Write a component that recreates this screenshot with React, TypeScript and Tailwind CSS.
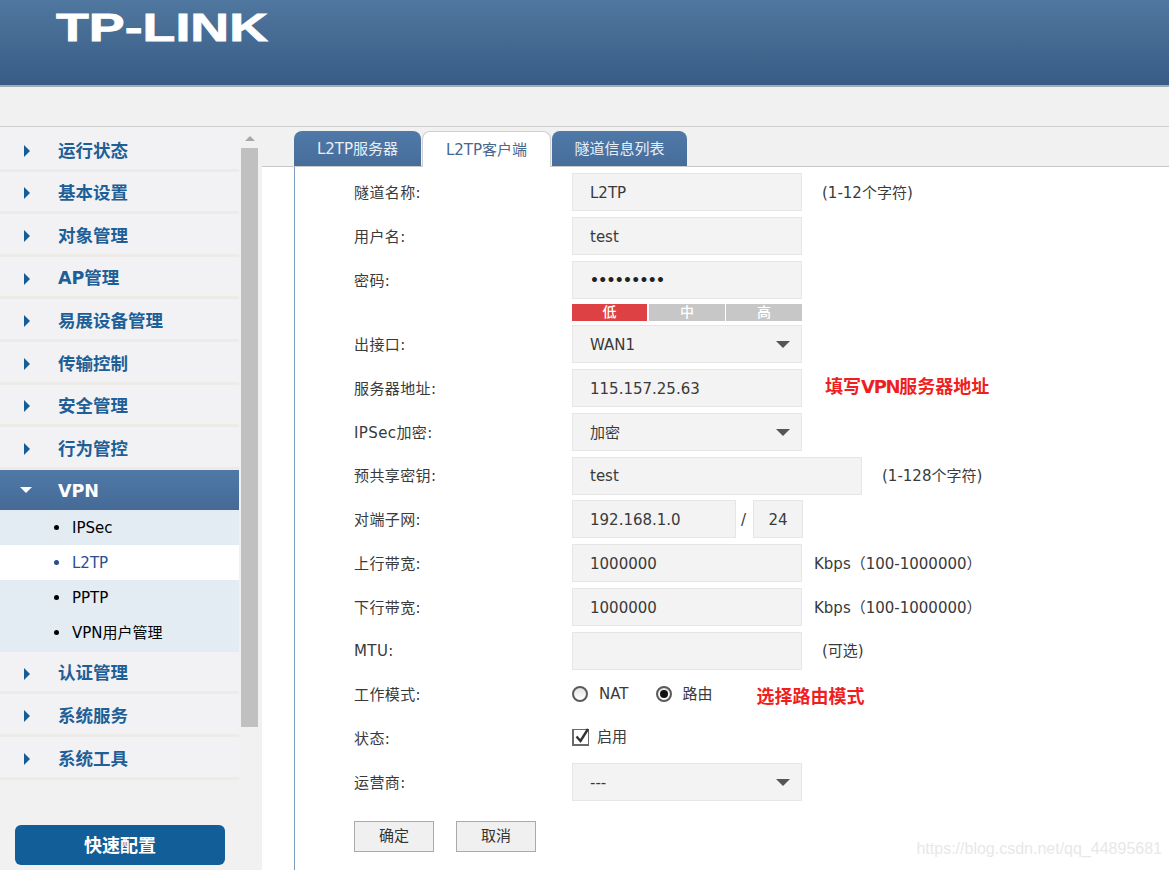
const menuTop = ['运行状态', '基本设置', '对象管理', 'AP管理', '易展设备管理', '传输控制', '安全管理', '行为管控'];
const menuBottom = ['认证管理', '系统服务', '系统工具'];
const vpnSubs = ['IPSec', 'L2TP', 'PPTP', 'VPN用户管理'];

function MenuItem({ label }: { label: string }) {
  return (
    <div className="flex h-[42.6px] shrink-0 items-center border-b-[3px] border-[#ecebe8] bg-[#f2f2f5] pt-[4px]">
      <span className="ml-6 h-0 w-0 border-y-[6px] border-l-[6px] border-y-transparent border-l-[#155d96]" />
      <span className="ml-[28px] text-[17.5px] font-bold text-[#1f5f97]">{label}</span>
    </div>
  );
}

function SubItem({ label, active }: { label: string; active?: boolean }) {
  return (
    <div className={`flex h-[35px] items-center ${active ? 'bg-white text-[#2a4d8f]' : 'text-black'}`}>
      <span className={`ml-[54px] h-[5px] w-[5px] rounded-full ${active ? 'bg-[#2a4d8f]' : 'bg-black'}`} />
      <span className="mt-[2px] ml-[13px] text-[15px]">{label}</span>
    </div>
  );
}

function Sidebar() {
  return (
    <aside className="flex h-full w-[262px] shrink-0 bg-[#f1f1f1]">
      <div className="flex h-full w-[239px] shrink-0 flex-col pt-[2px]">
        {menuTop.map((m) => (
          <MenuItem key={m} label={m} />
        ))}
        <div className="flex h-[40px] shrink-0 items-center bg-gradient-to-b from-[#5079a8] to-[#456a96]">
          <span className="ml-[20px] h-0 w-0 border-x-[6px] border-t-[6px] border-x-transparent border-t-white" />
          <span className="mt-[2px] ml-[26px] text-[17.5px] font-bold text-white">VPN</span>
        </div>
        <div className="shrink-0 bg-[#e3ecf2] pb-[2px]">
          {vpnSubs.map((s) => (
            <SubItem key={s} label={s} active={s === 'L2TP'} />
          ))}
        </div>
        {menuBottom.map((m) => (
          <MenuItem key={m} label={m} />
        ))}
        <div className="mt-auto mb-[5px] ml-[15px] flex h-[40px] w-[210px] items-center justify-center rounded-[6px] bg-[#125e99] text-[18px] font-bold text-white">
          快速配置
        </div>
      </div>
      {/* scrollbar */}
      <div className="ml-[2px] flex w-[17px] flex-col items-center">
        <div className="flex h-[21px] items-center">
          <span className="mt-[2px] h-0 w-0 border-x-[5px] border-b-[5px] border-x-transparent border-b-[#a8a8a8]" />
        </div>
        <div className="h-[579px] w-full bg-[#c0c0c0]" />
      </div>
    </aside>
  );
}

function Tabs() {
  const base = 'flex h-[35px] items-center justify-center rounded-t-[8px] pt-[2px] text-[15px]';
  const off = `${base} bg-gradient-to-b from-[#4f79a8] to-[#476d9a] text-[#e8eef5]`;
  return (
    <div className="flex h-[40px] items-end border-b border-[#c9c9c9] bg-[#f1f1f1] pl-[32px]">
      <div className={`${off} w-[127px]`}>L2TP服务器</div>
      <div className={`${base} relative -mb-px ml-px h-[36px] w-[129px] border border-b-0 border-[#cfcfcf] bg-white text-[#47688f]`}>L2TP客户端</div>
      <div className={`${off} ml-px w-[135px]`}>隧道信息列表</div>
    </div>
  );
}

function Row({ label, h = 'h-[44px]', children }: { label?: string; h?: string; children: React.ReactNode }) {
  return (
    <div className={`flex items-center ${h}`}>
      <div className="w-[218px] shrink-0 pt-[2px] text-[15px] tracking-[0.4px] text-[#3a3a3a]">{label}</div>
      {children}
    </div>
  );
}

function Field({ w = 'w-[230px]', children }: { w?: string; children?: React.ReactNode }) {
  return (
    <div className={`flex h-[38px] items-center border border-[#e6e6e6] bg-[#f3f3f3] pt-[2px] pl-[17px] text-[15px] text-[#3a3a3a] ${w}`}>
      {children}
    </div>
  );
}

function SelectField({ value }: { value: string }) {
  return (
    <div className="flex h-[38px] w-[230px] items-center justify-between border border-[#e6e6e6] bg-[#f3f3f3] pr-[11px] pl-[17px] text-[15px] text-[#3a3a3a]">
      <span className="pt-[2px]">{value}</span>
      <span className="h-0 w-0 border-x-[7px] border-t-[7px] border-x-transparent border-t-[#555]" />
    </div>
  );
}

function Hint({ children, ml = 'ml-5' }: { children: React.ReactNode; ml?: string }) {
  return <span className={`pt-[2px] text-[15px] text-[#3a3a3a] ${ml}`}>{children}</span>;
}

function Radio({ checked }: { checked?: boolean }) {
  return (
    <span className="flex h-[16px] w-[16px] items-center justify-center rounded-full border-2 border-[#5a5a5a] bg-gradient-to-b from-[#e4e4e4] to-white">
      {checked && <span className="h-[8px] w-[8px] rounded-full bg-[#111]" />}
    </span>
  );
}

function Form() {
  return (
    <div className="relative flex-1">
      <div className="ml-[32px] h-full border-l border-[#7a9dc0] pt-[3px] pl-[59px]">
        <Row label="隧道名称:">
          <Field>L2TP</Field>
          <Hint>(1-12个字符)</Hint>
        </Row>
        <Row label="用户名:">
          <Field>test</Field>
        </Row>
        <Row label="密码:">
          <div className="flex h-[38px] w-[230px] items-center border border-[#e6e6e6] bg-[#f3f3f3] pl-[17px] text-[14px] font-bold tracking-[-0.7px] text-[#222]">•••••••••</div>
        </Row>
        <div className="flex h-[20px] items-start pt-[2px] pl-[218px]">
          <div className="flex h-[17px] w-[230px] text-center text-[14px] leading-[17px] font-medium text-white">
            <div className="w-[75px] bg-[#de4144]">低</div>
            <div className="ml-[2px] w-[76px] bg-[#c7c7c7]">中</div>
            <div className="ml-px w-[76px] bg-[#c7c7c7]">高</div>
          </div>
        </div>
        <Row label="出接口:">
          <SelectField value="WAN1" />
        </Row>
        <Row label="服务器地址:">
          <Field>115.157.25.63</Field>
          <span className="mb-[4px] ml-[23px] text-[18px] font-bold text-[#f01f1f]">
            填写<span className="tracking-[-1.3px]">VPN</span>服务器地址
          </span>
        </Row>
        <Row label="IPSec加密:">
          <SelectField value="加密" />
        </Row>
        <Row label="预共享密钥:" h="h-[43px]">
          <Field w="w-[290px]">test</Field>
          <Hint>(1-128个字符)</Hint>
        </Row>
        <Row label="对端子网:">
          <Field w="w-[164px]">192.168.1.0</Field>
          <span className="mx-[5px] w-[7px] pt-[2px] text-[15px] text-[#3a3a3a]">/</span>
          <div className="flex h-[38px] w-[50px] items-center justify-center border border-[#e6e6e6] bg-[#f3f3f3] pt-[2px] text-[15px] text-[#3a3a3a]">24</div>
        </Row>
        <Row label="上行带宽:">
          <Field>1000000</Field>
          <Hint ml="ml-3">Kbps（100-1000000）</Hint>
        </Row>
        <Row label="下行带宽:">
          <Field>1000000</Field>
          <Hint ml="ml-3">Kbps（100-1000000）</Hint>
        </Row>
        <Row label="MTU:" h="h-[43px]">
          <Field />
          <Hint>(可选)</Hint>
        </Row>
        <Row label="工作模式:">
          <div className="flex items-center text-[15px] text-[#3a3a3a]">
            <Radio />
            <span className="ml-[11px]">NAT</span>
            <span className="ml-[28px]"><Radio checked /></span>
            <span className="ml-[10px]">路由</span>
            <span className="mt-[5px] ml-[44px] text-[18px] font-bold text-[#f01f1f]">选择路由模式</span>
          </div>
        </Row>
        <Row label="状态:">
          <div className="flex items-center pb-[1px] text-[15px] text-[#3a3a3a]">
            <span className="relative h-[17px] w-[17px] border border-b-2 border-l-2 border-[#6a6a6a] bg-white">
              <svg className="absolute -top-[3px] left-0" width="17" height="18" viewBox="0 0 17 18" fill="none" stroke="#333" strokeWidth="2.4">
                <path d="M2.5 9.5 L6.5 14 L14 2" />
              </svg>
            </span>
            <span className="ml-2">启用</span>
          </div>
        </Row>
        <Row label="运营商:">
          <SelectField value="---" />
        </Row>
        <div className="mt-[17px] flex gap-[22px]">
          <button className="h-[31px] w-[80px] border border-[#aaa] bg-[#f0f0f0] text-[15px] text-[#333]">确定</button>
          <button className="h-[31px] w-[80px] border border-[#aaa] bg-[#f0f0f0] text-[15px] text-[#333]">取消</button>
        </div>
      </div>
      <div className="absolute right-[7px] bottom-[9px] font-['Liberation_Sans',sans-serif] text-[16px] text-[#e8e8e8]">https://blog.csdn.net/qq_44895681</div>
    </div>
  );
}

export default function App() {
  return (
    <div className="flex h-[870px] w-[1169px] flex-col overflow-hidden bg-white font-['DejaVu_Sans','Noto_Sans_CJK_SC',sans-serif]">
      <header className="h-[87px] shrink-0 border-b-2 border-[#a4abb3] bg-gradient-to-b from-[#50779f] to-[#385c85] pt-[8px] pl-[56px]">
        <svg className="overflow-visible" width="260" height="44" viewBox="0 0 260 44">
          <text x="0" y="33" fontFamily="Liberation Sans" fontWeight="700" fontSize="39" fill="#fff" stroke="#fff" strokeWidth="0.8" textLength="212" lengthAdjust="spacingAndGlyphs">TP-LINK</text>
        </svg>
      </header>
      <div className="h-[40px] shrink-0 border-b border-[#d0d0d0] bg-[#f1f1f1]" />
      <div className="flex min-h-0 flex-1">
        <Sidebar />
        <main className="flex min-w-0 flex-1 flex-col">
          <Tabs />
          <Form />
        </main>
      </div>
    </div>
  );
}
